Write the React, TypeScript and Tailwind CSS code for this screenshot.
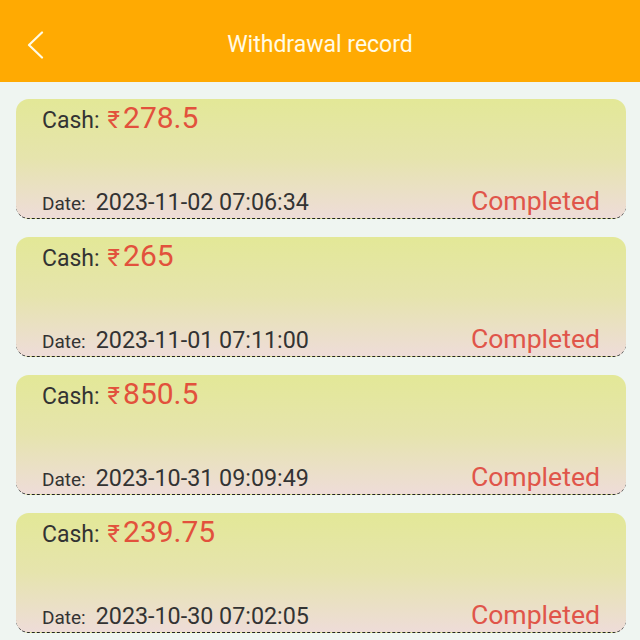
const records = [
  { cash: "278.5", date: "2023-11-02 07:06:34" },
  { cash: "265", date: "2023-11-01 07:11:00" },
  { cash: "850.5", date: "2023-10-31 09:09:49" },
  { cash: "239.75", date: "2023-10-30 07:02:05" },
];

export default function App() {
  return (
    <div
      className="w-[640px] h-[640px] overflow-hidden bg-[#eff5f1]"
      style={{ fontFamily: "Roboto, 'Noto Sans', sans-serif" }}
    >
      {/* Header */}
      <header className="relative h-[82px] bg-[#ffaa02] flex items-center justify-center">
        <svg
          className="absolute left-[26px] top-[31px]"
          width="18"
          height="28"
          viewBox="0 0 18 28"
          fill="none"
        >
          <polyline
            points="16,1.5 3,14 16,26.5"
            stroke="#fffbe6"
            strokeWidth="2.2"
            strokeLinecap="round"
            strokeLinejoin="round"
          />
        </svg>
        <h1 className="text-[23px] leading-none text-[#fffbe6] mt-[6px]">Withdrawal record</h1>
      </header>

      {/* Records */}
      <main className="pt-[17px] pl-[16px] pr-[14px] flex flex-col gap-[18px]">
        {records.map((r) => (
          <div
            key={r.date}
            className="h-[120px] rounded-[13px] border-b border-dashed border-[#222] bg-gradient-to-b from-[#e3e897] via-[#e6e4ad] to-[#eedcd8] pl-[26px] pr-[26px] pt-[4px] pb-[3px] flex flex-col justify-between"
          >
            <div className="flex items-baseline">
              <span className="text-[23px] leading-none text-[#333]">Cash:</span>
              <span className="ml-[8px] text-[30px] leading-none text-[#e2513c]">
                <span className="text-[24px] mr-[3px]">₹</span>
                {r.cash}
              </span>
            </div>
            <div className="flex items-baseline justify-between">
              <div className="flex items-baseline">
                <span className="text-[19px] leading-none text-[#333]">Date:</span>
                <span className="ml-[10px] text-[23.3px] leading-none text-[#333]">{r.date}</span>
              </div>
              <span className="text-[26.6px] leading-none text-[#e0554a]">Completed</span>
            </div>
          </div>
        ))}
      </main>
    </div>
  );
}
